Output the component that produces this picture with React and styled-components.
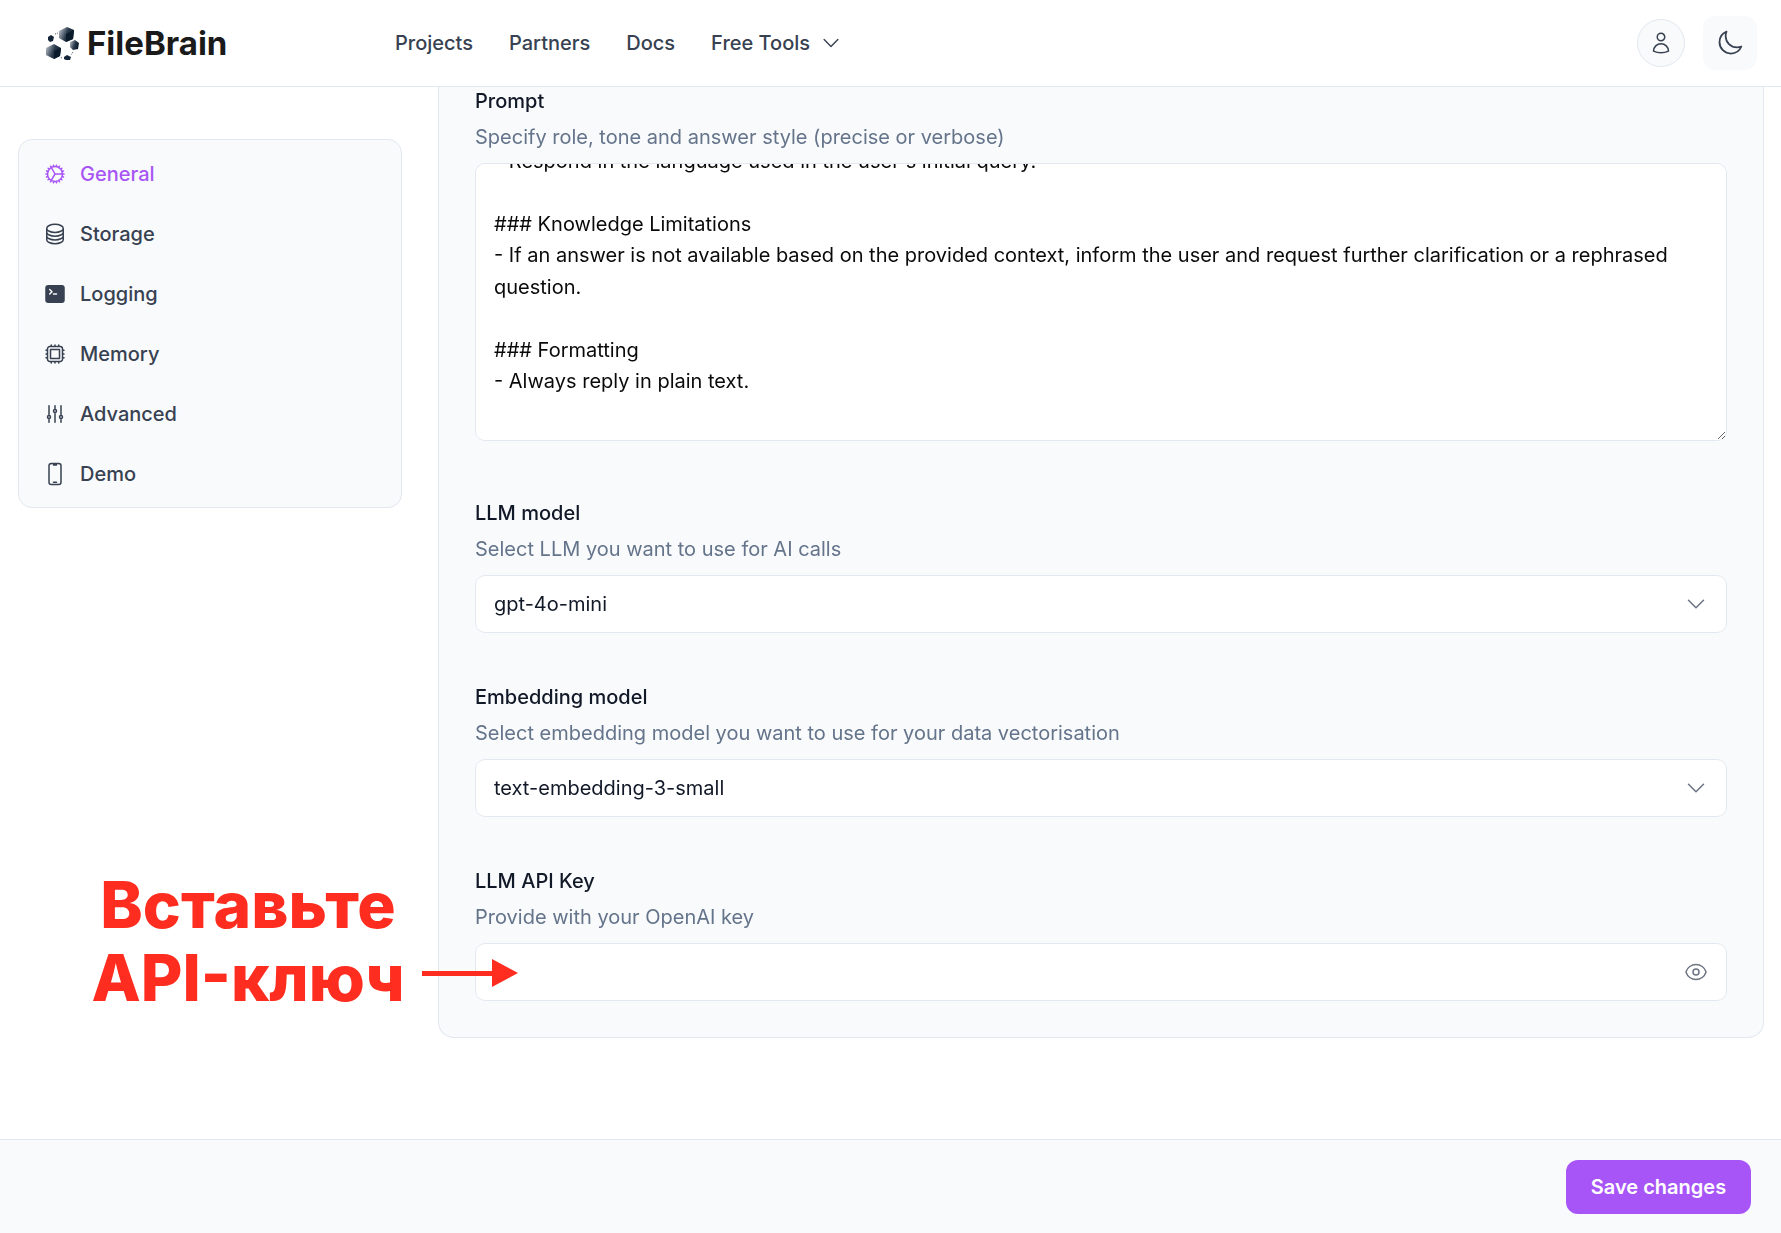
import React, { useLayoutEffect, useRef } from 'react';
import styled, { createGlobalStyle } from 'styled-components';
import {
  HiOutlineCog,
  HiOutlineCircleStack,
  HiCommandLine,
  HiOutlineCpuChip,
  HiOutlineAdjustmentsVertical,
  HiOutlineDevicePhoneMobile,
  HiOutlineUser,
  HiOutlineMoon,
  HiOutlineEye,
  HiChevronDown,
} from 'react-icons/hi2';

const GlobalStyle = createGlobalStyle`
  * { box-sizing: border-box; }
  body {
    margin: 0;
    background: #fff;
    font-family: Inter, 'Liberation Sans', sans-serif;
  }
`;

const PROMPT_TEXT = `### Response Style
- Respond in the language used in the user's initial query.

### Knowledge Limitations
- If an answer is not available based on the provided context, inform the user and request further clarification or a rephrased question.

### Formatting
- Always reply in plain text.




`;

const NAV_LINKS = ['Projects', 'Partners', 'Docs'];

const MENU = [
  { label: 'General', Icon: HiOutlineCog, active: true },
  { label: 'Storage', Icon: HiOutlineCircleStack },
  { label: 'Logging', Icon: HiCommandLine },
  { label: 'Memory', Icon: HiOutlineCpuChip },
  { label: 'Advanced', Icon: HiOutlineAdjustmentsVertical },
  { label: 'Demo', Icon: HiOutlineDevicePhoneMobile },
];

const Page = styled.div`
  position: relative;
  display: flex;
  flex-direction: column;
  height: 100vh;
  overflow: hidden;
`;

const Header = styled.header`
  flex: none;
  display: flex;
  align-items: center;
  height: 87px;
  padding: 0 24px 0 45px;
  border-bottom: 1px solid #e2e8f0;
`;

const Brand = styled.div`
  display: flex;
  align-items: center;
  gap: 8px;
  width: 350px;
`;

const BrandName = styled.span`
  font-size: 33px;
  font-weight: 700;
  color: #1a1a1a;
`;

const Nav = styled.nav`
  display: flex;
  align-items: center;
  gap: 36px;
`;

const NavLink = styled.a`
  display: flex;
  align-items: center;
  gap: 10px;
  font-size: 20px;
  font-weight: 500;
  color: #374151;
`;

const HeaderActions = styled.div`
  margin-left: auto;
  display: flex;
  align-items: center;
  gap: 18px;
`;

const UserButton = styled.button`
  display: flex;
  align-items: center;
  justify-content: center;
  width: 48px;
  height: 48px;
  padding: 0;
  border: 1px solid #e2e8f0;
  border-radius: 50%;
  background: #f9fafb;
  color: #374151;
  font-size: 24px;
`;

const ThemeButton = styled.button`
  display: flex;
  align-items: center;
  justify-content: center;
  width: 54px;
  height: 54px;
  padding: 0;
  border: 0;
  border-radius: 12px;
  background: #f9fafb;
  color: #374151;
  font-size: 28px;
`;

const Content = styled.div`
  flex: 1;
  min-height: 0;
  display: flex;
  align-items: flex-start;
  padding: 0 17px 0 18px;
`;

const Sidebar = styled.aside`
  flex: none;
  width: 384px;
  margin: 52px 36px 0 0;
  padding: 4px 24px 3px;
  border: 1px solid #e2e8f0;
  border-radius: 14px;
  background: #f9fafb;
`;

const MenuItem = styled.div`
  display: flex;
  align-items: center;
  gap: 13px;
  height: 60px;
  font-size: 20px;
  font-weight: 500;
  color: ${(p) => (p.$active ? '#a855f7' : '#374151')};

  svg {
    flex: none;
    font-size: 24px;
  }
`;

const Panel = styled.main`
  flex: 1;
  min-width: 0;
  padding: 0 36px 36px;
  border: 1px solid #e2e8f0;
  border-top: 0;
  border-radius: 0 0 16px 16px;
  background: #f9fafb;
`;

const Field = styled.section`
  & + & {
    margin-top: 50px;
  }
`;

const Label = styled.div`
  font-size: 20px;
  line-height: 28px;
  font-weight: 500;
  color: #111827;
  margin-bottom: 8px;
`;

const Hint = styled.div`
  font-size: 20px;
  line-height: 28px;
  color: #64748b;
  margin-bottom: 12px;
`;

const PromptArea = styled.textarea`
  display: block;
  width: 100%;
  height: 278px;
  margin-bottom: 58px;
  padding: 12px 18px;
  border: 1px solid #e2e8f0;
  border-radius: 10px;
  background: #fff;
  color: #0a0a0a;
  font-family: inherit;
  font-size: 20px;
  line-height: 31.5px;
  resize: vertical;
  outline: none;
  scrollbar-width: none;
`;

const InputBox = styled.div`
  display: flex;
  align-items: center;
  justify-content: space-between;
  height: 58px;
  padding: 0 18px;
  border: 1px solid #e2e8f0;
  border-radius: 10px;
  background: #fff;
  color: #111827;
  font-size: 20px;

  svg {
    flex: none;
    color: #6b7280;
    font-size: ${(p) => p.$iconSize || 24}px;
  }
`;

const Footer = styled.footer`
  flex: none;
  display: flex;
  align-items: center;
  justify-content: flex-end;
  height: 94px;
  padding-right: 30px;
  border-top: 1px solid #e2e8f0;
  background: #f9fafb;
`;

const SaveButton = styled.button`
  width: 185px;
  height: 54px;
  border: 0;
  border-radius: 12px;
  background: #a855f7;
  color: #fff;
  font-family: inherit;
  font-size: 20px;
  font-weight: 600;
`;

const Callout = styled.div`
  position: absolute;
  left: 76px;
  top: 868px;
  width: 344px;
  text-align: center;
  color: #ff2d20;
  font-size: 64px;
  line-height: 73px;
  font-weight: 800;
`;

const CalloutArrow = styled.svg`
  position: absolute;
  left: 422px;
  top: 958px;
`;

function Logo() {
  return (
    <svg width="34" height="34" viewBox="0 0 34 34">
      <defs>
        <linearGradient id="cube" x1="0" y1="0" x2="1" y2="0.4">
          <stop offset="0" stopColor="#c9ced4" />
          <stop offset="0.6" stopColor="#2a3a4c" />
          <stop offset="1" stopColor="#0b1b2c" />
        </linearGradient>
      </defs>
      <path d="M14 5l8-4 7 3-1 9-7 3-7-4z" fill="url(#cube)" />
      <path d="M21 8l8-4-1 9-7 3z" fill="#0b1b2c" />
      <path d="M1 22l8-4 7 4-1 8-6 3-8-4z" fill="url(#cube)" />
      <path d="M9 25l7-3-1 8-6 3z" fill="#0b1b2c" />
      <path d="M25 16l5-2 4 3-1 6-5 1-3-3z" fill="url(#cube)" />
      <path d="M3 11l3-2 3 2-1 4-3 1-2-2z" fill="#14263a" />
      <path d="M19 31l3-2 4 2-1 3-4 0-2-1z" fill="#14263a" />
      <path d="M10 8l3-1M28 26l-2 3M17 32l-2-1" stroke="#4a5866" strokeWidth="1" strokeDasharray="1 1" fill="none" />
    </svg>
  );
}

export default function App() {
  const promptRef = useRef(null);

  // the prompt is shown scrolled down, first line cut by the box edge
  useLayoutEffect(() => {
    if (promptRef.current) promptRef.current.scrollTop = 62;
  }, []);

  return (
    <Page>
      <GlobalStyle />
      <Header>
        <Brand>
          <Logo />
          <BrandName>FileBrain</BrandName>
        </Brand>
        <Nav>
          {NAV_LINKS.map((link) => (
            <NavLink key={link}>{link}</NavLink>
          ))}
          <NavLink>
            Free Tools <HiChevronDown size={22} />
          </NavLink>
        </Nav>
        <HeaderActions>
          <UserButton aria-label="Account">
            <HiOutlineUser />
          </UserButton>
          <ThemeButton aria-label="Theme">
            <HiOutlineMoon />
          </ThemeButton>
        </HeaderActions>
      </Header>

      <Content>
        <Sidebar>
          {MENU.map(({ label, Icon, active }) => (
            <MenuItem key={label} $active={active}>
              <Icon />
              {label}
            </MenuItem>
          ))}
        </Sidebar>

        <Panel>
          <Field>
            <Label>Prompt</Label>
            <Hint>Specify role, tone and answer style (precise or verbose)</Hint>
            <PromptArea ref={promptRef} defaultValue={PROMPT_TEXT} spellCheck={false} />
          </Field>
          <Field>
            <Label>LLM model</Label>
            <Hint>Select LLM you want to use for AI calls</Hint>
            <InputBox>
              gpt-4o-mini
              <HiChevronDown />
            </InputBox>
          </Field>
          <Field>
            <Label>Embedding model</Label>
            <Hint>Select embedding model you want to use for your data vectorisation</Hint>
            <InputBox>
              text-embedding-3-small
              <HiChevronDown />
            </InputBox>
          </Field>
          <Field>
            <Label>LLM API Key</Label>
            <Hint>Provide with your OpenAI key</Hint>
            <InputBox>
              <span />
              <HiOutlineEye />
            </InputBox>
          </Field>
        </Panel>
      </Content>

      <Footer>
        <SaveButton>Save changes</SaveButton>
      </Footer>

      <Callout>
        Вставьте
        <br />
        API-ключ
      </Callout>
      <CalloutArrow width="96" height="30" viewBox="0 0 96 30">
        <path d="M0 13h70V1l26 14-26 14V18H0z" fill="#ff2d20" />
      </CalloutArrow>
    </Page>
  );
}
